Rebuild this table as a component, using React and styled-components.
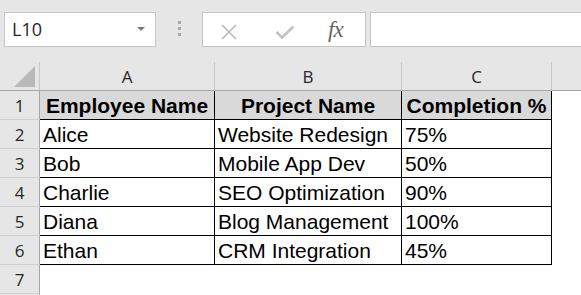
import React from "react";
import styled, { createGlobalStyle } from "styled-components";

const GlobalStyle = createGlobalStyle`
    html, body {
        margin: 0;
        padding: 0;
        background: #ffffff;
        overflow: hidden;
    }
`;

const columns = ["A", "B", "C", ""];
const header = ["Employee Name", "Project Name", "Completion %"];
const rows = [
    ["Alice", "Website Redesign", "75%"],
    ["Bob", "Mobile App Dev", "50%"],
    ["Charlie", "SEO Optimization", "90%"],
    ["Diana", "Blog Management", "100%"],
    ["Ethan", "CRM Integration", "45%"],
];

export default function App() {
    return (
        <Page>
            <GlobalStyle />
            <FormulaBar>
                <NameBox>
                    L10
                    <DropArrow />
                </NameBox>
                <Grip>
                    <span />
                    <span />
                    <span />
                </Grip>
                <ActionBox>
                    <ActionIcon>
                        <svg width='18' height='16' viewBox='0 0 18 16'>
                            <path d='M2 1 L16 15 M16 1 L2 15' stroke='#b9b9b9' strokeWidth='1.6' fill='none' />
                        </svg>
                    </ActionIcon>
                    <ActionIcon>
                        <svg width='20' height='14' viewBox='0 0 20 14'>
                            <path d='M1.5 7 L7 12.5 L18.5 1.5' stroke='#c4c4c4' strokeWidth='2.8' fill='none' />
                        </svg>
                    </ActionIcon>
                    <FxLabel>fx</FxLabel>
                </ActionBox>
                <FormulaInput />
            </FormulaBar>

            <Sheet>
                <Corner>
                    <CornerMark />
                </Corner>
                {columns.map((c, i) => (
                    <ColHead key={"c" + i} last={i === columns.length - 1}>
                        {c}
                    </ColHead>
                ))}

                <RowHead>1</RowHead>
                {header.map((h) => (
                    <Cell key={h} heading>
                        {h}
                    </Cell>
                ))}
                <Blank />

                {rows.map((r, i) => (
                    <React.Fragment key={r[0]}>
                        <RowHead>{i + 2}</RowHead>
                        {r.map((v, j) => (
                            <Cell key={j}>{v}</Cell>
                        ))}
                        <Blank />
                    </React.Fragment>
                ))}

                <RowHead>7</RowHead>
                <Blank />
                <Blank />
                <Blank />
                <Blank />

                {/* next row only peeks in at the bottom edge */}
                <RowHead />
                <Blank />
                <Blank />
                <Blank />
                <Blank />
            </Sheet>
        </Page>
    );
}

const Page = styled.div`
    width: 581px;
    height: 295px;
    overflow: hidden;
`;

const FormulaBar = styled.div`
    display: flex;
    align-items: flex-start;
    height: 62px;
    padding: 12px 0 0 4px;
    box-sizing: border-box;
    background: #e6e6e6;
`;

const NameBox = styled.div`
    position: relative;
    width: 152px;
    height: 35px;
    box-sizing: border-box;
    border: 1px solid #c6c6c6;
    background: #ffffff;
    padding-left: 7px;
    font-family: "Open Sans", "Noto Sans", sans-serif;
    font-size: 18px;
    line-height: 33px;
    color: #262626;
`;

const DropArrow = styled.span`
    position: absolute;
    right: 10px;
    top: 14px;
    width: 0;
    height: 0;
    border-left: 4px solid transparent;
    border-right: 4px solid transparent;
    border-top: 4px solid #7a7a7a;
`;

const Grip = styled.div`
    display: flex;
    flex-direction: column;
    gap: 3px;
    width: 46px;
    align-items: center;
    padding-top: 9px;

    span {
        width: 3px;
        height: 3px;
        background: #a8a8a8;
    }
`;

const ActionBox = styled.div`
    display: flex;
    align-items: center;
    width: 164px;
    height: 35px;
    box-sizing: border-box;
    border: 1px solid #c6c6c6;
    background: #ffffff;
    padding-left: 17px;
`;

const ActionIcon = styled.span`
    display: flex;
    width: 55px;
    align-items: center;
    padding-top: 4px;
`;

const FxLabel = styled.span`
    font-family: "Liberation Serif", "DejaVu Serif", serif;
    font-style: italic;
    font-size: 23px;
    color: #666666;
    margin-left: -2px;
    letter-spacing: -1px;
`;

const FormulaInput = styled.div`
    flex: 1;
    height: 35px;
    margin-left: 4px;
    box-sizing: border-box;
    border: 1px solid #c6c6c6;
    border-right: none;
    background: #ffffff;
`;

const Sheet = styled.div`
    display: grid;
    grid-template-columns: 40px 175px 187px 150px 1fr;
    grid-auto-rows: 29px;
`;

const Corner = styled.div`
    position: relative;
    background: #e6e6e6;
    border-right: 1px solid #c8c8c8;
    border-bottom: 1px solid #a6a6a6;
`;

const CornerMark = styled.span`
    position: absolute;
    right: 4px;
    bottom: 3px;
    width: 0;
    height: 0;
    border-left: 21px solid transparent;
    border-bottom: 21px solid #b9b9b9;
`;

const ColHead = styled.div`
    background: #e6e6e6;
    border-right: ${(p) => (p.last ? "none" : "1px solid #c8c8c8")};
    border-bottom: 1px solid #a6a6a6;
    font-family: "Open Sans", "Noto Sans", sans-serif;
    font-size: 17px;
    line-height: 30px;
    text-align: center;
    color: #262626;
`;

const RowHead = styled.div`
    background: #e6e6e6;
    border-right: 1px solid #a6a6a6;
    border-bottom: 1px solid #d0d0d0;
    font-family: "Open Sans", "Noto Sans", sans-serif;
    font-size: 17px;
    line-height: 30px;
    text-align: center;
    color: #262626;
`;

const Cell = styled.div`
    box-sizing: border-box;
    border-right: 1px solid #000000;
    border-bottom: 1px solid #000000;
    background: ${(p) => (p.heading ? "#d9d9d9" : "#ffffff")};
    font-family: "Liberation Sans", Arial, sans-serif;
    font-size: 21px;
    font-weight: ${(p) => (p.heading ? 700 : 400)};
    text-align: ${(p) => (p.heading ? "center" : "left")};
    line-height: 28px;
    padding: ${(p) => (p.heading ? "1px 0 0 0" : "1px 0 0 3px")};
    white-space: nowrap;
    overflow: hidden;
    color: #000000;
`;

const Blank = styled.div`
    background: #ffffff;
`;
